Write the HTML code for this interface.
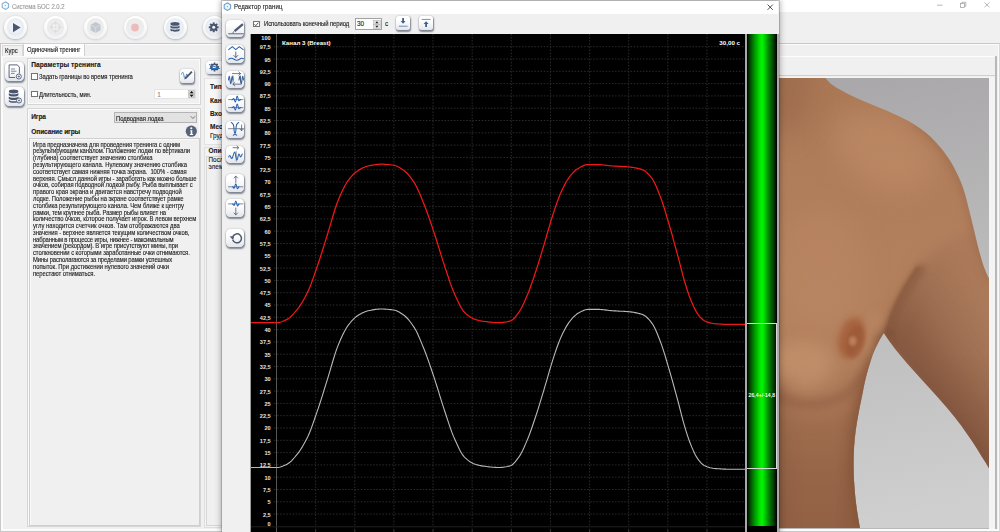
<!DOCTYPE html>
<html lang="ru"><head><meta charset="utf-8"><title>Система БОС 2.0.2</title>
<style>
html,body{margin:0;padding:0}
body{width:1000px;height:532px;overflow:hidden;background:#f0f0f0;position:relative;font-family:"Liberation Sans","DejaVu Sans",sans-serif;font-size:6px;color:#1a1a1a;line-height:1}
.abs{position:absolute}
.t{position:absolute;white-space:nowrap;line-height:8px;height:8px;-webkit-text-stroke:0.12px currentColor}
.b{font-weight:bold}
.axl text{font-family:"Liberation Sans",sans-serif;font-size:5.6px;font-weight:bold;fill:#e4e4e4}
.cht{font-family:"Liberation Sans",sans-serif;font-size:6.2px;font-weight:bold;fill:#fff}
.rb{position:absolute;width:23px;height:23px;border-radius:50%;background:linear-gradient(#fff 20%,#f0f1f3);box-shadow:0 1.2px 2.5px rgba(95,105,125,.38),0 0 1.2px rgba(95,105,125,.3)}
.rb::after{content:"";position:absolute;left:2.8px;top:2.6px;width:17.4px;height:17.4px;border-radius:50%;background:radial-gradient(circle at 50% 45%,#f6f9fc 0,#e7ecf2 65%,#dbe2ea 100%)}
.rb.dis{box-shadow:0 1.2px 2.5px rgba(120,125,140,.22),0 0 1.2px rgba(120,125,140,.2)}
.rb.dis::after{background:radial-gradient(circle at 50% 45%,#efeff0 0,#ebebec 70%,#e6e6e8 100%)}
.sb{position:absolute;border-radius:4.5px;background:linear-gradient(#fff 30%,#f3f4f6 65%,#e2e5ea);box-shadow:0.8px 1.5px 1.6px rgba(60,70,90,.6),0 0 1.4px rgba(60,70,90,.45)}
.grp{position:absolute;border:1px solid #d5d5d5;box-shadow:inset 0 0 0 1px #fbfbfb, 0 0 0 0 #fff;box-sizing:border-box}
.cb{position:absolute;width:6.2px;height:6.2px;box-sizing:border-box;border:1px solid #737373;background:#fff}
.desc{transform:scaleX(0.92);transform-origin:0 0;position:absolute;left:32.5px;top:141.7px;width:172px;font-size:6.4px;line-height:6.785px;color:#1c1c1c;white-space:nowrap;-webkit-text-stroke:0.12px currentColor}
.desc div{height:6.785px}

</style></head>
<body>
<!-- ================= main window ================= -->
<div class="abs" id="mtitle" style="left:0;top:0;width:1000px;height:12px;background:#fff"></div>
<svg class="abs" style="left:0.700px;top:1.400px" width="9" height="9.500" viewBox="0 0 9 9.500"><polygon points="4.400,0.800 7.600,2.700 7.600,6.500 4.400,8.400 1.200,6.500 1.200,2.700" fill="#f2f9fc" stroke="#82aed4" stroke-width="1.050"/><circle cx="4.400" cy="4.600" r="0.700" fill="#aab"/></svg>
<div class="t" style="left:12px;top:2.900px;font-size:6.500px;color:#9a9a9a;transform:scaleX(0.920);transform-origin:0 0;letter-spacing:-0.070px">Система БОС 2.0.2</div>
<svg class="abs" style="left:930px;top:0" width="70" height="12" viewBox="0 0 70 12">
 <g stroke="#9b9b9b" stroke-width="0.7" fill="none"><line x1="7" y1="5.2" x2="12.5" y2="5.2"/><rect x="30.5" y="3.4" width="4" height="4"/><path d="M31.8 3.4V2.3h4v4h-1.2"/><path d="M54.4 2.4l5 5M59.4 2.4l-5 5"/></g></svg>

<!-- toolbar round buttons -->
<div class="rb" style="left:4.100px;top:15.600px"></div>
<div class="rb dis" style="left:44.100px;top:15.600px"></div>
<div class="rb dis" style="left:84.100px;top:15.600px"></div>
<div class="rb dis" style="left:123.500px;top:15.600px"></div>
<div class="rb" style="left:163.500px;top:15.600px"></div>
<div class="rb" style="left:202.500px;top:15.600px"></div>
<svg class="abs" style="left:0;top:12px" width="230" height="32" viewBox="0 12 230 32">
 <path d="M13 23l7.6 4.6L13 32.2z" fill="#4a5670"/>
 <g stroke="#d2d4d9" stroke-width="0.700" fill="none"><circle cx="55.600" cy="27.200" r="4.300"/><path d="M55.600 21.200v3.600M55.600 29.600v3.600M49.600 27.200h3.600M58 27.200h3.600"/></g><circle cx="55.600" cy="27.200" r="0.700" fill="#d2d4d9"/>
 <path d="M95.6 22l5 2.7v5.6l-5 2.7-5-2.7v-5.6z" fill="#c3c7d0"/><path d="M95.6 27.6v5.2M95.6 27.6l-4.8-2.7M95.6 27.6l4.8-2.7" stroke="#e4e6ea" stroke-width="0.6"/>
 <circle cx="135" cy="27.5" r="3.9" fill="#ecbcbc"/>
 <g fill="#4a5670"><ellipse cx="175" cy="23.9" rx="4.6" ry="1.9"/><path d="M170.4 25.4c1 1.6 8.200 1.600 9.200 0v2c-1 1.600-8.200 1.600-9.200 0zM170.400 28.600c1 1.600 8.200 1.600 9.200 0v2c-1 1.600-8.200 1.600-9.200 0z"/></g>
 <g transform="translate(213.700 27.300)" fill="#4a5670"><circle r="3.500"/><g id="gt"><rect x="-1" y="-4.900" width="2" height="9.800"/></g><use href="#gt" transform="rotate(45)"/><use href="#gt" transform="rotate(90)"/><use href="#gt" transform="rotate(135)"/><circle r="1.500" fill="#f4f5f7"/></g>
</svg>

<!-- tab bar -->
<div class="abs" style="left:0;top:43px;width:1000px;height:489px;background:#fbfbfb;border:1px solid #c8c8c8;border-right-color:#d8d8d8;box-sizing:border-box"></div>
<div class="abs" style="left:2.600px;top:44.500px;width:995.400px;height:484.500px;background:#f0f0f0"></div>
<div class="abs" style="left:2px;top:45px;width:21px;height:10.500px;border:1px solid #d9d9d9;border-bottom:none;box-sizing:border-box;background:#f0f0f0"></div>
<div class="abs" style="left:23px;top:43px;width:61.500px;height:13px;border:1px solid #d0d0d0;border-bottom:none;box-sizing:border-box;background:#fff"></div>
<div class="abs" style="left:2px;top:55.500px;width:996px;height:1px;background:#fafafa"></div>
<div class="t" style="left:4.600px;top:47.250px;font-size:6.400px;transform:scaleX(0.920);transform-origin:0 0;letter-spacing:0.099px">Курс</div>
<div class="t" style="left:26.600px;top:46.250px;font-size:6.400px;transform:scaleX(0.920);transform-origin:0 0;letter-spacing:-0.050px">Одиночный тренинг</div>

<!-- left sidebar buttons -->
<div class="sb" style="left:5px;top:62px;width:18.500px;height:18.500px"></div>
<div class="sb" style="left:5px;top:87px;width:18.500px;height:18.500px"></div>
<svg class="abs" style="left:0;top:56px" width="30" height="56" viewBox="0 56 30 56">
 <g fill="none" stroke="#4a5670" stroke-width="0.900"><path d="M19.400 73.500v-6.300l-2-2.300h-8.300v12.600h6"/><path d="M11 69h4M11 71.200h5.500M11 73.400h3.500" stroke-width="0.700"/></g>
 <circle cx="18.800" cy="76.500" r="2.500" fill="#fff" stroke="#4a5670" stroke-width="0.900"/><path d="M17.600 76.500h2.400M18.800 75.300v2.400" stroke="#4a5670" stroke-width="0.700"/>
 <g fill="#4a5670"><ellipse cx="13.600" cy="91.500" rx="4.800" ry="1.900"/><path d="M8.800 93c1 1.700 8.600 1.700 9.600 0v2.200c-1 1.700-8.600 1.700-9.600 0zM8.800 96.500c1 1.700 8.600 1.700 9.600 0v2.200c-1 1.700-8.600 1.700-9.600 0zM8.800 100c1 1.700 8.600 1.700 9.600 0v1.500c-1 1.700-8.600 1.700-9.600 0z"/></g>
 <circle cx="19" cy="100.500" r="2.500" fill="#fff" stroke="#4a5670" stroke-width="0.900"/><path d="M17.800 100.500h2.400M19 99.300v2.400" stroke="#4a5670" stroke-width="0.700"/>
</svg>

<!-- group 1 -->
<div class="grp" style="left:27px;top:58px;width:174px;height:47px"></div>
<div class="t b" style="left:31.300px;top:61.000px;font-size:6.600px;letter-spacing:0.047px">Параметры тренинга</div>
<div class="cb" style="left:31px;top:73.100px;width:6.900px;height:6.600px"></div>
<div class="t" style="left:39.300px;top:72.550px;font-size:6.400px;transform:scaleX(0.920);transform-origin:0 0;letter-spacing:-0.075px">Задать границы во время тренинга</div>
<div class="cb" style="left:31px;top:90.700px;width:6.900px;height:6.700px"></div>
<div class="t" style="left:39.400px;top:90.500px;font-size:6.400px;transform:scaleX(0.920);transform-origin:0 0;letter-spacing:-0.074px">Длительность, мин.</div>
<div class="sb" style="left:179.500px;top:68.800px;width:14px;height:14px;border-radius:3.500px"></div>
<svg class="abs" style="left:178px;top:67px" width="18" height="18" viewBox="178 67 18 18"><path d="M181.500 74.500c.8-3 1.600-3 2.200 0s1.200 6 2 3 1-5 1.800-2" fill="none" stroke="#2f6fb5" stroke-width="0.800"/><path d="M184.500 79.500l.8-2.200 6-6.300 1.300 1.300-6 6.300z" fill="#4a5670"/></svg>
<div class="abs" style="left:154.400px;top:88.700px;width:42px;height:10.700px;background:#fff;border:1px solid #e4e4e4;box-sizing:border-box"></div>
<div class="t" style="left:157.200px;top:90.650px;font-size:6.400px;color:#8a8a8a">1</div>
<svg class="abs" style="left:188px;top:90px" width="8" height="9" viewBox="0 0 8 9"><rect x="0.400" y="0.300" width="6.400" height="3.600" fill="#d2d2d2" stroke="#b0b0b0" stroke-width="0.400"/><rect x="0.400" y="4.200" width="6.400" height="3.600" fill="#d2d2d2" stroke="#b0b0b0" stroke-width="0.400"/><path d="M1.700 3.300l1.900-2.300 1.900 2.300zM1.700 4.800l1.900 2.300 1.900-2.300z" fill="#111"/></svg>

<!-- group 2 -->
<div class="grp" style="left:27px;top:108px;width:174px;height:418.500px"></div>
<div class="t b" style="left:31.300px;top:112.900px;font-size:6.600px;letter-spacing:-0.165px">Игра</div>
<div class="abs" style="left:114.400px;top:112px;width:83px;height:10.500px;background:#e2e2e2;border:1px solid #b4b4b4;box-sizing:border-box"></div>
<div class="t" style="left:116.300px;top:114.650px;font-size:6.400px;transform:scaleX(0.920);transform-origin:0 0;letter-spacing:-0.029px">Подводная лодка</div>
<svg class="abs" style="left:189px;top:114px" width="8" height="7" viewBox="0 0 8 7"><path d="M1.700 2.300l2.200 2.200 2.200-2.200" fill="none" stroke="#444" stroke-width="0.700"/></svg>
<div class="t b" style="left:31.300px;top:128.400px;font-size:6.600px;letter-spacing:-0.135px">Описание игры</div>
<svg class="abs" style="left:185px;top:124.500px" width="13" height="13" viewBox="0 0 13 13"><circle cx="6.300" cy="6.200" r="5.600" fill="#56637b"/><circle cx="6.300" cy="3.300" r="1.050" fill="#fff"/><path d="M5.200 5.300h2.100v3.800h.8v.9h-3.300v-.9h.9v-2.900h-.5z" fill="#fff"/></svg>
<div class="abs" style="left:28.700px;top:138px;width:171px;height:387.600px;border:1px solid #cfcfcf;box-sizing:border-box;background:#f0f0f0;box-shadow:inset 1px 1px 0 #fafafa"></div>
<div class="desc">
<div style="letter-spacing:-0.084px">Игра предназначена для проведения тренинга с одним</div>
<div style="letter-spacing:-0.089px">результирующим каналом. Положение лодки по вертикали</div>
<div style="letter-spacing:-0.005px">(глубина) соответствует значению столбика</div>
<div style="letter-spacing:0.014px">результирующего канала. Нулевому значению столбика</div>
<div style="letter-spacing:-0.062px">соответствует самая нижняя точка экрана.&nbsp; 100% - самая</div>
<div style="letter-spacing:-0.091px">верхняя. Смысл данной игры - заработать как можно больше</div>
<div style="letter-spacing:-0.048px">очков, собирая подводной лодкой рыбу. Рыба выплывает с</div>
<div style="letter-spacing:-0.007px">правого края экрана и двигается навстречу подводной</div>
<div style="letter-spacing:-0.061px">лодке. Положение рыбы на экране соответствует рамке</div>
<div style="letter-spacing:-0.034px">столбика результирующего канала. Чем ближе к центру</div>
<div style="letter-spacing:-0.100px">рамки, тем крупнее рыба. Размер рыбы влияет на</div>
<div style="letter-spacing:-0.043px">количество очков, которое получает игрок. В левом верхнем</div>
<div style="letter-spacing:0.015px">углу находится счетчик очков. Там отображаются два</div>
<div style="letter-spacing:-0.056px">значения - верхнее является текущим количеством очков,</div>
<div style="letter-spacing:-0.168px">набранным в процессе игры, нижнее - максимальным</div>
<div style="letter-spacing:-0.102px">значением (рекордом). В игре присутствуют мины, при</div>
<div style="letter-spacing:-0.071px">столкновении с которыми заработанные очки отнимаются.</div>
<div style="letter-spacing:-0.127px">Мины располагаются за пределами рамки успешных</div>
<div style="letter-spacing:-0.031px">попыток. При достижении нулевого значений очки</div>
<div style="letter-spacing:-0.078px">перестают отниматься.</div>
</div>

<!-- middle panel (mostly hidden by dialog) -->
<div class="sb" style="left:206px;top:60.500px;width:18px;height:13px;border-radius:3.500px"></div>
<svg class="abs" style="left:205px;top:59px" width="18" height="16" viewBox="205 59 18 16"><g transform="translate(214.500 67)" fill="#4a5670"><circle r="3.200"/><g id="gt2"><rect x="-0.900" y="-4.500" width="1.800" height="9"/></g><use href="#gt2" transform="rotate(45)"/><use href="#gt2" transform="rotate(90)"/><use href="#gt2" transform="rotate(135)"/><circle r="1.900" fill="#f4f5f7"/></g><path d="M209 64.500l10.500 4M209.500 68.500h10" stroke="#2f6fb5" stroke-width="1" fill="none"/></svg>
<div class="abs" style="left:203.500px;top:78px;width:20px;height:66.500px;background:#f7f7f7;border:1px solid #e2e2e2;box-sizing:border-box"></div>
<div class="abs" style="left:203.500px;top:146.500px;width:20px;height:381px;background:#f3f3f3;border:1px solid #dedede;box-sizing:border-box"></div>
<div class="abs" style="left:205.500px;top:156px;width:18px;height:370px;background:#f0f0f0;border:1px solid #d6d6d6;box-sizing:border-box"></div>
<div class="t b" style="left:210px;top:83px;font-size:6.500px">Тип</div>
<div class="t b" style="left:210px;top:96.600px;font-size:6.500px">Кан</div>
<div class="t b" style="left:210px;top:109.600px;font-size:6.500px">Вхо</div>
<div class="t b" style="left:210px;top:122.600px;font-size:6.500px">Мес</div>
<div class="t" style="left:210px;top:132.150px;font-size:6.400px">Груд</div>
<div class="t b" style="left:208.500px;top:146.800px;font-size:6.500px">Опи</div>
<div class="t" style="left:208.500px;top:156.150px;font-size:6.400px">Посл</div>
<div class="t" style="left:208.500px;top:163.150px;font-size:6.400px">элем</div>

<!-- right image panel -->
<div class="abs" style="left:770px;top:56px;width:227px;height:19.500px;border:1px solid #fdfdfd;border-bottom-color:#cfcfcf;border-right-color:#dadada;box-sizing:border-box;background:#f0f0f0"></div>
<div class="abs" style="left:770px;top:77px;width:225px;height:452px;background:#f4f4f4"></div>
<div class="abs" style="left:995px;top:56px;width:1.800px;height:473px;background:linear-gradient(90deg,#c4c4c4,#a9a9a9 50%,#c9c9c9)"></div>
<div class="abs" style="left:770px;top:528px;width:218.500px;height:1px;background:#b9b9b9"></div>
<svg class="abs" style="left:778px;top:78px;overflow:hidden" width="210.500" height="450" viewBox="778 78 210.500 450">
<defs>
 <linearGradient id="bgG" x1="0" y1="0" x2="0.100" y2="1"><stop offset="0" stop-color="#a7a5a7"/><stop offset="0.380" stop-color="#b7b6b7"/><stop offset="0.760" stop-color="#c6c5c6"/><stop offset="1" stop-color="#cfcfcf"/></linearGradient>
 <linearGradient id="skG" x1="0" y1="0" x2="0" y2="1"><stop offset="0" stop-color="#aa7855"/><stop offset="0.250" stop-color="#b17e5c"/><stop offset="0.600" stop-color="#b5825f"/><stop offset="0.720" stop-color="#a97757"/><stop offset="0.850" stop-color="#9b6b4d"/><stop offset="1" stop-color="#946447"/></linearGradient>
 <linearGradient id="armG" gradientUnits="userSpaceOnUse" x1="896" y1="356" x2="986" y2="296"><stop offset="0" stop-color="#754a36" stop-opacity="0.850"/><stop offset="0.300" stop-color="#7f533d" stop-opacity="0.700"/><stop offset="0.600" stop-color="#8a5e47" stop-opacity="0.500"/><stop offset="1" stop-color="#8f644d" stop-opacity="0.220"/></linearGradient>
 <filter id="bl3" x="-40%" y="-40%" width="180%" height="180%"><feGaussianBlur stdDeviation="3"/></filter>
 <filter id="bl2" x="-40%" y="-40%" width="180%" height="180%"><feGaussianBlur stdDeviation="1.600"/></filter>
 <filter id="bl4" x="-60%" y="-60%" width="220%" height="220%"><feGaussianBlur stdDeviation="4"/></filter>
 <filter id="bl8" x="-100%" y="-100%" width="300%" height="300%"><feGaussianBlur stdDeviation="8"/></filter>
 <filter id="bl14" x="-100%" y="-100%" width="300%" height="300%"><feGaussianBlur stdDeviation="14"/></filter>
 <clipPath id="bodyClip"><path id="bodyP" d="M770 70H820.400C827 82 833 86 839.900 89.500C847 93.500 854 97 861.500 100.300C870 104 879 107.500 887.500 111.100C896 114.800 905 119 913.500 124.100C921 128.700 928.500 134.500 935.100 141.400C941 147.500 946 154 950.300 160.900C954.500 168 958 175 961.100 182.500C964 190 966 197 967.600 204.100C969.800 213 972 221.500 974 230.100C976 239 978 247.500 980.500 256.100C982.500 263.500 985 271 988.500 277.700H1000V480L988.500 467.600C986.500 464 984.500 460.500 982 457C975.500 446 968.500 435.500 960.800 425C952.500 414 943.500 403.500 934.200 393.300C925.500 383.500 916.500 374 907.700 364C899.500 354.500 891.500 345 883.800 333C878 342 873.500 351.500 870.500 361.500C867 372 864.500 382.500 862.600 393.300C860 405.500 857.500 418 855.700 430.500C854.300 441 853.600 451.500 853.600 462.300C853.500 471 853.800 480 854.600 488.900C855.500 502 857.500 515 860 528V540H770Z"/></clipPath>
</defs>
<rect x="770" y="70" width="230" height="470" fill="url(#bgG)"/>
<use href="#bodyP" fill="url(#skG)"/>
<g clip-path="url(#bodyClip)">
 <!-- shoulder highlight -->
 <ellipse cx="885" cy="150" rx="55" ry="36" fill="#c38f6b" opacity="0.550" filter="url(#bl14)" transform="rotate(28 885 150)"/>
 <ellipse cx="820" cy="270" rx="45" ry="60" fill="#bd8a66" opacity="0.450" filter="url(#bl14)"/>
 <!-- pec highlight -->
 <ellipse cx="803" cy="365" rx="30" ry="24" fill="#c99872" opacity="0.550" filter="url(#bl8)"/>
 <ellipse cx="872" cy="330" rx="9" ry="22" fill="#c08d69" opacity="0.400" filter="url(#bl4)" transform="rotate(25 872 330)"/>
 <!-- neck shadow top-left -->
 <ellipse cx="783" cy="92" rx="28" ry="42" fill="#946548" opacity="0.550" filter="url(#bl14)"/>
 <!-- shoulder outer edge shadow -->
 <path d="M913.500 122C935 135 952 158 962 184C970 210 976 240 990 280" fill="none" stroke="#8c5c40" stroke-width="5" opacity="0.500" filter="url(#bl4)"/>
 <!-- arm shade -->
 <path d="M926 258C912 280 900 300 893 318C889 326 887 330 886 334C900 352 930 388 960 424C972 440 982 456 1000 480V225C975 228 950 238 926 258Z" fill="url(#armG)" filter="url(#bl8)"/>
 <path d="M884 333C900 352 930 388 960 424C972 440 982 456 992 472" fill="none" stroke="#6e4535" stroke-width="13" opacity="0.500" filter="url(#bl4)"/>
 <path d="M889 336C892 320 903 294 923 266" fill="none" stroke="#6f452f" stroke-width="9" opacity="0.420" filter="url(#bl3)"/><path d="M886 334C889 318 900 292 918 267" fill="none" stroke="#73472f" stroke-width="2.500" opacity="0.450" filter="url(#bl2)"/>
 <!-- torso side shadow -->
 <path d="M884 335C872 360 864 392 857 430C854 462 854 490 861 528" fill="none" stroke="#75482f" stroke-width="12" opacity="0.600" filter="url(#bl4)"/>
 <path d="M868 372C860 405 852 440 852 535" fill="none" stroke="#8a5a3d" stroke-width="20" opacity="0.400" filter="url(#bl8)"/>
 <!-- under-pec shadow -->
 <path d="M772 394C795 406 820 409 845 395C858 386 866 375 872 360" fill="none" stroke="#8a583c" stroke-width="8" opacity="0.550" filter="url(#bl4)"/>
 <path d="M770 540V410C800 425 840 420 870 400V540Z" fill="#8a5a3e" opacity="0.250" filter="url(#bl8)"/>
 <rect x="765" y="380" width="22" height="170" fill="#7e5038" opacity="0.350" filter="url(#bl8)"/>
 <!-- nipple -->
 <ellipse cx="851.500" cy="338" rx="12.500" ry="21" fill="#a45e3a" opacity="0.900" filter="url(#bl3)" transform="rotate(15 851.500 338)"/>
 <ellipse cx="855.500" cy="342" rx="8.500" ry="16.500" fill="#985434" opacity="0.500" filter="url(#bl2)" transform="rotate(15 855.500 342)"/>
 <ellipse cx="852.800" cy="341" rx="3.800" ry="4.800" fill="#c58b6b" opacity="0.750" filter="url(#bl2)"/>
</g>
</svg>


<!-- ================= dialog ================= -->
<div class="abs" style="left:221.500px;top:0.500px;width:557px;height:532px;background:#f0f0f0;box-shadow:0 0 6px 1px rgba(0,0,0,.32),0 0 0 0.700px rgba(0,0,0,.22)"></div>
<div class="abs" style="left:222px;top:1px;width:556px;height:13px;background:#fff"></div>
<svg class="abs" style="left:222.600px;top:2px" width="9" height="9.500" viewBox="0 0 9 9.500"><polygon points="4.400,0.800 7.600,2.700 7.600,6.500 4.400,8.400 1.200,6.500 1.200,2.700" fill="#eaf5fa" stroke="#6b9bc6" stroke-width="1.050"/><circle cx="4.400" cy="4.600" r="0.700" fill="#99a"/></svg>
<div class="t" style="left:234px;top:2.700px;font-size:6.600px;color:#222;transform:scaleX(0.920);transform-origin:0 0;letter-spacing:0.107px">Редактор границ</div>
<svg class="abs" style="left:763.200px;top:1.600px" width="14" height="11" viewBox="0 0 14 11"><path d="M4.600 2.600l5.200 5.200M9.800 2.600l-5.200 5.200" stroke="#222" stroke-width="0.800" fill="none"/></svg>
<!-- dialog toolbar -->
<div class="cb" style="left:253.400px;top:21px;width:6.300px;height:6.300px"></div>
<svg class="abs" style="left:253.400px;top:21px" width="7" height="7" viewBox="0 0 7 7"><path d="M1.500 3.300l1.300 1.400 2.500-3" fill="none" stroke="#222" stroke-width="0.800"/></svg>
<div class="t" style="left:263.600px;top:20.150px;font-size:6.400px;transform:scaleX(0.920);transform-origin:0 0;letter-spacing:-0.059px">Использовать конечный период</div>
<div class="abs" style="left:355px;top:18.400px;width:26.500px;height:11.200px;background:#fff;border:1px solid #a2a2a2;box-sizing:border-box"></div>
<div class="t" style="left:357px;top:20.250px;font-size:6.400px">30</div>
<svg class="abs" style="left:372.500px;top:19.500px" width="8" height="9" viewBox="0 0 8 9"><rect x="0.500" y="0.300" width="6.800" height="3.900" fill="#e4e4e4" stroke="#aaa" stroke-width="0.500"/><rect x="0.500" y="4.700" width="6.800" height="3.900" fill="#e4e4e4" stroke="#aaa" stroke-width="0.500"/><path d="M2.300 3.300l1.600-2 1.600 2zM2.300 5.700l1.600 2 1.600-2z" fill="#222"/></svg>
<div class="t" style="left:385px;top:20.250px;font-size:6.400px">с</div>
<div class="sb" style="left:396px;top:16px;width:14px;height:14px;border-radius:3px"></div>
<div class="sb" style="left:419px;top:16px;width:14px;height:14px;border-radius:3px"></div>
<svg class="abs" style="left:394px;top:14px" width="42" height="18" viewBox="394 14 42 18">
 <path d="M402.200 18h1.800v3h1.600l-2.500 2.700-2.500-2.700h1.600z" fill="#3f5f95"/><path d="M398.800 26.200h8.800" stroke="#3f5f95" stroke-width="0.700"/>
 <path d="M425.200 27h1.800v-3h1.600l-2.500-2.700-2.500 2.700h1.600z" fill="#3f5f95"/><path d="M421.800 19.400h8.800" stroke="#3f5f95" stroke-width="0.700"/>
</svg>
<!-- dialog left tool buttons -->
<div class="sb" style="left:226px;top:19.9px;width:18.2px;height:17.6px"></div>
<div class="sb" style="left:226px;top:45.2px;width:18.2px;height:17.6px"></div>
<div class="sb" style="left:226px;top:70.5px;width:18.2px;height:17.6px"></div>
<div class="sb" style="left:226px;top:94.9px;width:18.2px;height:17.6px"></div>
<div class="sb" style="left:226px;top:120.8px;width:18.2px;height:17.6px"></div>
<div class="sb" style="left:226px;top:145.6px;width:18.2px;height:17.6px"></div>
<div class="sb" style="left:226px;top:174.4px;width:18.2px;height:17.6px"></div>
<div class="sb" style="left:226px;top:199.4px;width:18.2px;height:17.6px"></div>
<div class="sb" style="left:226px;top:229.4px;width:18.2px;height:17.6px"></div>
<svg class="abs" style="left:222px;top:14px" width="29" height="240" viewBox="222 14 29 240" fill="none" stroke-linecap="round" stroke-linejoin="round"><path d="M242.9 24.1L234.6 31.1" stroke="#4e5a74" stroke-width="2.3" stroke-linecap="butt"/><path d="M234 31.600l-1.300 1.200" stroke="#4e5a74" stroke-width="1"/><path d="M228.700 33.800h14.800" stroke="#4e5a74" stroke-width="0.900"/><path d="M228.700 49.600l3.600-2.900 3.500 2.900 3.500-2.900 3.900 2.900" stroke="#2a62b0" stroke-width="1.050"/><path d="M235.800 52v5.300M233.800 55.500l2 2 2-2" stroke="#4e5a74" stroke-width="0.900"/><path d="M228.700 59.200c1.800-1.300 3.600-1.300 5.400 0s3.600 1.300 5.400 0 2.700-1.200 4-.4" stroke="#2a62b0" stroke-width="1.050"/><path d="M228.500 80c.5-5 1-5 1.500 0s1 5 1.500 0 1-5 1.500 0" stroke="#2a62b0" stroke-width="1.050"/><path d="M239 80c.5-5 1-5 1.500 0s1 5 1.500 0 1-5 1.500 0" stroke="#2a62b0" stroke-width="1.050"/><path d="M232.500 73.600h8M238.700 71.900l1.900 1.700-1.900 1.700M241 84.200h-8M234.800 82.500l-1.900 1.700 1.900 1.700M233 76v6M240.500 76v6" stroke="#4e5a74" stroke-width="0.800"/><path d="M228.500 99.6h14.500" stroke="#4e5a74" stroke-width="0.700"/><path d="M232 99.6c1 0 1.200-1.200 1.800-1.200s.800 3.600 1.600 3.600 1-6 1.800-6 .900 4.800 1.700 4.800 .800-1.200 1.800-1.200" stroke="#2a62b0" stroke-width="1.050"/><path d="M228.500 107.6h14.500" stroke="#4e5a74" stroke-width="0.700"/><path d="M232 107.6c1 0 1.200-1.200 1.800-1.200s.800 3.600 1.600 3.600 1-6 1.800-6 .900 4.800 1.700 4.800 .800-1.200 1.800-1.200" stroke="#2a62b0" stroke-width="1.050"/><path d="M228.500 128.700h15" stroke="#4e5a74" stroke-width="0.700"/><path d="M231.300 122.500c2.200 1 2.700 3.500 2.700 6.200s.500 5.500 2.700 6.500M238.700 122.500c-2.200 1-2.700 3.500-2.700 6.200s-.500 5.500-2.700 6.500" stroke="#2a62b0" stroke-width="1.050"/><path d="M241.600 125v5.600M239.900 129l1.700 1.800 1.700-1.800" stroke="#4e5a74" stroke-width="0.800"/><path d="M233 147.700h5.600M237 146l1.800 1.700-1.800 1.700" stroke="#4e5a74" stroke-width="0.800"/><path d="M236.200 151.500v9.500" stroke="#4e5a74" stroke-width="0.600"/><path d="M228.700 157c.700-2 1.300-2 2 0s1.300 2 2 0 1.200-5 2-5 1.300 8 2.200 8 1.200-6 2-6 1 3 1.800 3 1-2 1.500-3" stroke="#2a62b0" stroke-width="1.050"/><path d="M235.800 182.400v-6.200M234 178l1.800-1.900 1.800 1.900" stroke="#4e5a74" stroke-width="0.800"/><path d="M228.500 186.800h14.500" stroke="#4e5a74" stroke-width="0.700"/><path d="M232.500 186.800c.800 0 1 1.500 1.600 1.500s1-4.500 1.700-4.500 1 5 1.700 5 .800-2 1.600-2" stroke="#2a62b0" stroke-width="1.050"/><path d="M228.500 203.900h14.500" stroke="#4e5a74" stroke-width="0.700"/><path d="M232.500 203.900c.800 0 1 1.500 1.600 1.500s1-4.500 1.700-4.500 1 5 1.700 5 .800-2 1.600-2" stroke="#2a62b0" stroke-width="1.050"/><path d="M235.800 208v6.800M234 213l1.800 1.900 1.800-1.900" stroke="#4e5a74" stroke-width="0.800"/><path d="M232.700 239.800a4.500 4.500 0 1 0 .300-3.600" stroke="#4e5a74" stroke-width="1.500" stroke-linecap="butt"/><path d="M229.600 236.600l4.600-.600-1 4z" fill="#4e5a74" stroke="none"/></svg>

<!-- chart -->
<div class="abs" style="left:250px;top:33.500px;width:1px;height:499px;background:#9c9c9c"></div>
<div class="abs" style="left:251px;top:34px;width:494px;height:498px;background:#000"></div>
<div class="abs" style="left:745px;top:34px;width:2px;height:498px;background:linear-gradient(90deg,#8c8c8c,#c4c4c4 50%,#8c8c8c)"></div>
<div class="abs" style="left:747px;top:34px;width:29.700px;height:498px;background:#000"></div>
<div class="abs" style="left:747px;top:34px;width:29.700px;height:492px;background:linear-gradient(90deg,#000 0,#003800 8%,#008a00 23%,#00e000 42%,#00f800 50%,#00d000 59%,#008800 72%,#004000 88%,#000 99%)"></div>
<div class="abs" style="left:776.700px;top:34px;width:1.900px;height:498px;background:#aeaaaa"></div>
<div class="abs" style="left:747px;top:322.800px;width:29.700px;height:146.500px;border:1px solid #d8d8d8;border-left:none;box-sizing:border-box"></div>
<div class="t" style="left:747px;top:391px;width:29.700px;text-align:center;font-size:5px;color:#fff;letter-spacing:0.100px">26,4+/-14,8</div>
<svg class="abs" style="left:0;top:0" width="1000" height="532" viewBox="0 0 1000 532"><g stroke="#2c2c2c" stroke-width="1" stroke-dasharray="1.5 1.6"><line x1="274.0" y1="514.10" x2="745" y2="514.10"/><line x1="274.0" y1="501.80" x2="745" y2="501.80"/><line x1="274.0" y1="489.50" x2="745" y2="489.50"/><line x1="274.0" y1="477.20" x2="745" y2="477.20"/><line x1="274.0" y1="464.90" x2="745" y2="464.90"/><line x1="274.0" y1="452.60" x2="745" y2="452.60"/><line x1="274.0" y1="440.30" x2="745" y2="440.30"/><line x1="274.0" y1="428.00" x2="745" y2="428.00"/><line x1="274.0" y1="415.70" x2="745" y2="415.70"/><line x1="274.0" y1="403.40" x2="745" y2="403.40"/><line x1="274.0" y1="391.10" x2="745" y2="391.10"/><line x1="274.0" y1="378.80" x2="745" y2="378.80"/><line x1="274.0" y1="366.50" x2="745" y2="366.50"/><line x1="274.0" y1="354.20" x2="745" y2="354.20"/><line x1="274.0" y1="341.90" x2="745" y2="341.90"/><line x1="274.0" y1="329.60" x2="745" y2="329.60"/><line x1="274.0" y1="317.30" x2="745" y2="317.30"/><line x1="274.0" y1="305.00" x2="745" y2="305.00"/><line x1="274.0" y1="292.70" x2="745" y2="292.70"/><line x1="274.0" y1="280.40" x2="745" y2="280.40"/><line x1="274.0" y1="268.10" x2="745" y2="268.10"/><line x1="274.0" y1="255.80" x2="745" y2="255.80"/><line x1="274.0" y1="243.50" x2="745" y2="243.50"/><line x1="274.0" y1="231.20" x2="745" y2="231.20"/><line x1="274.0" y1="218.90" x2="745" y2="218.90"/><line x1="274.0" y1="206.60" x2="745" y2="206.60"/><line x1="274.0" y1="194.30" x2="745" y2="194.30"/><line x1="274.0" y1="182.00" x2="745" y2="182.00"/><line x1="274.0" y1="169.70" x2="745" y2="169.70"/><line x1="274.0" y1="157.40" x2="745" y2="157.40"/><line x1="274.0" y1="145.10" x2="745" y2="145.10"/><line x1="274.0" y1="132.80" x2="745" y2="132.80"/><line x1="274.0" y1="120.50" x2="745" y2="120.50"/><line x1="274.0" y1="108.20" x2="745" y2="108.20"/><line x1="274.0" y1="95.90" x2="745" y2="95.90"/><line x1="274.0" y1="83.60" x2="745" y2="83.60"/><line x1="274.0" y1="71.30" x2="745" y2="71.30"/><line x1="274.0" y1="59.00" x2="745" y2="59.00"/><line x1="274.0" y1="46.70" x2="745" y2="46.70"/><line x1="315.63" y1="34" x2="315.63" y2="526.4"/><line x1="354.77" y1="34" x2="354.77" y2="526.4"/><line x1="393.90" y1="34" x2="393.90" y2="526.4"/><line x1="433.03" y1="34" x2="433.03" y2="526.4"/><line x1="472.17" y1="34" x2="472.17" y2="526.4"/><line x1="511.30" y1="34" x2="511.30" y2="526.4"/><line x1="550.43" y1="34" x2="550.43" y2="526.4"/><line x1="589.57" y1="34" x2="589.57" y2="526.4"/><line x1="628.70" y1="34" x2="628.70" y2="526.4"/><line x1="667.83" y1="34" x2="667.83" y2="526.4"/><line x1="706.97" y1="34" x2="706.97" y2="526.4"/></g><line x1="276.5" y1="34" x2="276.5" y2="532" stroke="#565656" stroke-width="1"/><line x1="251" y1="526.8" x2="745" y2="526.8" stroke="#202020" stroke-width="1"/><line x1="315.63" y1="528.9" x2="315.63" y2="532" stroke="#3a3a3a" stroke-width="1"/><line x1="354.77" y1="528.9" x2="354.77" y2="532" stroke="#3a3a3a" stroke-width="1"/><line x1="393.90" y1="528.9" x2="393.90" y2="532" stroke="#3a3a3a" stroke-width="1"/><line x1="433.03" y1="528.9" x2="433.03" y2="532" stroke="#3a3a3a" stroke-width="1"/><line x1="472.17" y1="528.9" x2="472.17" y2="532" stroke="#3a3a3a" stroke-width="1"/><line x1="511.30" y1="528.9" x2="511.30" y2="532" stroke="#3a3a3a" stroke-width="1"/><line x1="550.43" y1="528.9" x2="550.43" y2="532" stroke="#3a3a3a" stroke-width="1"/><line x1="589.57" y1="528.9" x2="589.57" y2="532" stroke="#3a3a3a" stroke-width="1"/><line x1="628.70" y1="528.9" x2="628.70" y2="532" stroke="#3a3a3a" stroke-width="1"/><line x1="667.83" y1="528.9" x2="667.83" y2="532" stroke="#3a3a3a" stroke-width="1"/><line x1="706.97" y1="528.9" x2="706.97" y2="532" stroke="#3a3a3a" stroke-width="1"/><g class="axl" text-anchor="end"><text x="270.7" y="525.7">0</text><text x="270.7" y="516.6">2,5</text><text x="270.7" y="504.2">5</text><text x="270.7" y="491.9">7,5</text><text x="270.7" y="479.6">10</text><text x="270.7" y="467.3">12,5</text><text x="270.7" y="455.0">15</text><text x="270.7" y="442.7">17,5</text><text x="270.7" y="430.4">20</text><text x="270.7" y="418.1">22,5</text><text x="270.7" y="405.8">25</text><text x="270.7" y="393.5">27,5</text><text x="270.7" y="381.2">30</text><text x="270.7" y="368.9">32,5</text><text x="270.7" y="356.6">35</text><text x="270.7" y="344.3">37,5</text><text x="270.7" y="332.0">40</text><text x="270.7" y="319.7">42,5</text><text x="270.7" y="307.4">45</text><text x="270.7" y="295.1">47,5</text><text x="270.7" y="282.8">50</text><text x="270.7" y="270.5">52,5</text><text x="270.7" y="258.2">55</text><text x="270.7" y="245.9">57,5</text><text x="270.7" y="233.6">60</text><text x="270.7" y="221.3">62,5</text><text x="270.7" y="209.0">65</text><text x="270.7" y="196.7">67,5</text><text x="270.7" y="184.4">70</text><text x="270.7" y="172.1">72,5</text><text x="270.7" y="159.8">75</text><text x="270.7" y="147.5">77,5</text><text x="270.7" y="135.2">80</text><text x="270.7" y="123.0">82,5</text><text x="270.7" y="110.6">85</text><text x="270.7" y="98.3">87,5</text><text x="270.7" y="86.0">90</text><text x="270.7" y="73.8">92,5</text><text x="270.7" y="61.5">95</text><text x="270.7" y="49.1">97,5</text><text x="270.7" y="40.2">100</text></g><path d="M251.0 467.5 L252.5 467.5 L254.0 467.5 L255.5 467.5 L257.0 467.5 L258.5 467.5 L260.0 467.5 L261.5 467.5 L263.0 467.5 L264.5 467.5 L266.0 467.5 L267.5 467.5 L269.0 467.5 L270.5 467.5 L272.0 467.5 L273.5 467.5 L275.0 467.5 L276.5 467.5 L278.0 467.5 L279.5 467.2 L281.0 466.8 L282.5 466.3 L284.0 465.6 L285.5 464.9 L287.0 464.2 L288.5 463.3 L290.0 462.2 L291.5 460.8 L293.0 459.2 L294.5 457.5 L296.0 455.7 L297.5 453.9 L299.0 451.9 L300.5 449.7 L302.0 447.4 L303.5 444.8 L305.0 442.1 L306.5 439.2 L308.0 436.2 L309.5 432.7 L311.0 429.0 L312.5 424.9 L314.0 420.7 L315.5 416.3 L317.0 411.9 L318.5 407.6 L320.0 403.0 L321.5 398.3 L323.0 393.6 L324.5 388.7 L326.0 383.9 L327.5 379.1 L329.0 374.2 L330.5 369.2 L332.0 364.0 L333.5 359.0 L335.0 354.1 L336.5 349.6 L338.0 345.6 L339.5 342.0 L341.0 338.5 L342.5 335.3 L344.0 332.2 L345.5 329.5 L347.0 327.0 L348.5 324.9 L350.0 323.0 L351.5 321.2 L353.0 319.6 L354.5 318.1 L356.0 316.8 L357.5 315.7 L359.0 314.7 L360.5 313.9 L362.0 313.1 L363.5 312.4 L365.0 311.8 L366.5 311.2 L368.0 310.8 L369.5 310.5 L371.0 310.2 L372.5 309.9 L374.0 309.6 L375.5 309.4 L377.0 309.2 L378.5 309.1 L380.0 309.0 L381.5 309.0 L383.0 309.0 L384.5 309.1 L386.0 309.2 L387.5 309.3 L389.0 309.5 L390.5 309.6 L392.0 309.8 L393.5 310.0 L395.0 310.3 L396.5 310.8 L398.0 311.5 L399.5 312.3 L401.0 313.3 L402.5 314.3 L404.0 315.3 L405.5 316.5 L407.0 318.0 L408.5 319.6 L410.0 321.5 L411.5 323.5 L413.0 325.7 L414.5 327.9 L416.0 330.6 L417.5 333.6 L419.0 336.9 L420.5 340.4 L422.0 344.1 L423.5 347.8 L425.0 351.5 L426.5 355.5 L428.0 359.6 L429.5 363.9 L431.0 368.3 L432.5 372.7 L434.0 377.2 L435.5 381.8 L437.0 386.5 L438.5 391.4 L440.0 396.3 L441.5 401.2 L443.0 405.9 L444.5 410.5 L446.0 415.0 L447.5 419.6 L449.0 424.1 L450.5 428.5 L452.0 432.6 L453.5 436.4 L455.0 439.8 L456.5 443.1 L458.0 446.3 L459.5 449.4 L461.0 452.2 L462.5 454.6 L464.0 456.6 L465.5 458.1 L467.0 459.4 L468.5 460.6 L470.0 461.7 L471.5 462.6 L473.0 463.4 L474.5 464.0 L476.0 464.5 L477.5 464.9 L479.0 465.3 L480.5 465.6 L482.0 465.9 L483.5 466.1 L485.0 466.3 L486.5 466.5 L488.0 466.7 L489.5 466.9 L491.0 467.0 L492.5 467.2 L494.0 467.3 L495.5 467.4 L497.0 467.5 L498.5 467.5 L500.0 467.5 L501.5 467.4 L503.0 467.2 L504.5 467.0 L506.0 466.8 L507.5 466.5 L509.0 466.1 L510.5 465.7 L512.0 465.0 L513.5 463.7 L515.0 462.1 L516.5 460.2 L518.0 458.2 L519.5 456.1 L521.0 453.6 L522.5 450.7 L524.0 447.5 L525.5 444.1 L527.0 440.6 L528.5 437.0 L530.0 433.0 L531.5 428.8 L533.0 424.5 L534.5 420.0 L536.0 415.5 L537.5 410.9 L539.0 406.1 L540.5 401.2 L542.0 396.2 L543.5 391.3 L545.0 386.2 L546.5 381.1 L548.0 375.8 L549.5 370.6 L551.0 365.6 L552.5 360.8 L554.0 356.2 L555.5 351.7 L557.0 347.3 L558.5 343.2 L560.0 339.4 L561.5 336.0 L563.0 332.8 L564.5 329.9 L566.0 327.1 L567.5 324.6 L569.0 322.4 L570.5 320.5 L572.0 318.7 L573.5 317.0 L575.0 315.6 L576.5 314.3 L578.0 313.3 L579.5 312.5 L581.0 311.6 L582.5 310.9 L584.0 310.2 L585.5 309.7 L587.0 309.5 L588.5 309.4 L590.0 309.4 L591.5 309.4 L593.0 309.4 L594.5 309.4 L596.0 309.4 L597.5 309.4 L599.0 309.4 L600.5 309.5 L602.0 309.6 L603.5 309.8 L605.0 309.9 L606.5 310.1 L608.0 310.3 L609.5 310.5 L611.0 310.6 L612.5 310.8 L614.0 310.9 L615.5 310.9 L617.0 311.0 L618.5 311.1 L620.0 311.2 L621.5 311.2 L623.0 311.3 L624.5 311.4 L626.0 311.5 L627.5 311.6 L629.0 311.7 L630.5 311.9 L632.0 312.1 L633.5 312.3 L635.0 312.6 L636.5 312.9 L638.0 313.2 L639.5 313.6 L641.0 314.0 L642.5 314.6 L644.0 315.3 L645.5 316.2 L647.0 317.5 L648.5 319.0 L650.0 320.7 L651.5 322.6 L653.0 324.8 L654.5 327.5 L656.0 330.7 L657.5 334.2 L659.0 338.0 L660.5 341.9 L662.0 346.1 L663.5 350.6 L665.0 355.4 L666.5 360.5 L668.0 365.6 L669.5 370.7 L671.0 375.8 L672.5 381.2 L674.0 386.6 L675.5 392.1 L677.0 397.6 L678.5 403.2 L680.0 409.0 L681.5 414.9 L683.0 420.6 L684.5 425.9 L686.0 430.8 L687.5 435.6 L689.0 440.0 L690.5 444.0 L692.0 447.6 L693.5 451.0 L695.0 454.2 L696.5 456.9 L698.0 459.1 L699.5 461.1 L701.0 462.8 L702.5 464.3 L704.0 465.4 L705.5 466.1 L707.0 466.7 L708.5 467.2 L710.0 467.7 L711.5 468.0 L713.0 468.3 L714.5 468.5 L716.0 468.6 L717.5 468.7 L719.0 468.8 L720.5 468.9 L722.0 469.0 L723.5 469.1 L725.0 469.1 L726.5 469.2 L728.0 469.2 L729.5 469.2 L731.0 469.2 L732.5 469.2 L734.0 469.2 L735.5 469.2 L737.0 469.2 L738.5 469.2 L740.0 469.2 L741.5 469.2 L743.0 469.2 L744.5 469.2 L745.0 469.2" fill="none" stroke="#b9b9b9" stroke-width="1.1" stroke-linejoin="round"/><path d="M251.0 322.7 L252.5 322.7 L254.0 322.7 L255.5 322.7 L257.0 322.7 L258.5 322.7 L260.0 322.7 L261.5 322.7 L263.0 322.7 L264.5 322.7 L266.0 322.7 L267.5 322.7 L269.0 322.7 L270.5 322.7 L272.0 322.7 L273.5 322.7 L275.0 322.7 L276.5 322.7 L278.0 322.7 L279.5 322.4 L281.0 322.0 L282.5 321.5 L284.0 320.8 L285.5 320.1 L287.0 319.4 L288.5 318.5 L290.0 317.4 L291.5 316.0 L293.0 314.4 L294.5 312.7 L296.0 310.9 L297.5 309.1 L299.0 307.1 L300.5 304.9 L302.0 302.6 L303.5 300.0 L305.0 297.3 L306.5 294.4 L308.0 291.4 L309.5 287.9 L311.0 284.2 L312.5 280.1 L314.0 275.9 L315.5 271.5 L317.0 267.1 L318.5 262.8 L320.0 258.2 L321.5 253.5 L323.0 248.8 L324.5 243.9 L326.0 239.1 L327.5 234.3 L329.0 229.4 L330.5 224.4 L332.0 219.2 L333.5 214.2 L335.0 209.3 L336.5 204.8 L338.0 200.8 L339.5 197.2 L341.0 193.7 L342.5 190.5 L344.0 187.4 L345.5 184.7 L347.0 182.2 L348.5 180.1 L350.0 178.2 L351.5 176.4 L353.0 174.8 L354.5 173.3 L356.0 172.0 L357.5 170.9 L359.0 169.9 L360.5 169.1 L362.0 168.3 L363.5 167.6 L365.0 167.0 L366.5 166.4 L368.0 166.0 L369.5 165.7 L371.0 165.4 L372.5 165.1 L374.0 164.8 L375.5 164.6 L377.0 164.4 L378.5 164.3 L380.0 164.2 L381.5 164.2 L383.0 164.2 L384.5 164.3 L386.0 164.4 L387.5 164.5 L389.0 164.7 L390.5 164.8 L392.0 165.0 L393.5 165.2 L395.0 165.5 L396.5 166.0 L398.0 166.7 L399.5 167.5 L401.0 168.5 L402.5 169.5 L404.0 170.5 L405.5 171.7 L407.0 173.2 L408.5 174.8 L410.0 176.7 L411.5 178.7 L413.0 180.9 L414.5 183.1 L416.0 185.8 L417.5 188.8 L419.0 192.1 L420.5 195.6 L422.0 199.3 L423.5 203.0 L425.0 206.7 L426.5 210.7 L428.0 214.8 L429.5 219.1 L431.0 223.5 L432.5 227.9 L434.0 232.4 L435.5 237.0 L437.0 241.7 L438.5 246.6 L440.0 251.5 L441.5 256.4 L443.0 261.1 L444.5 265.7 L446.0 270.2 L447.5 274.8 L449.0 279.3 L450.5 283.7 L452.0 287.8 L453.5 291.6 L455.0 295.0 L456.5 298.3 L458.0 301.5 L459.5 304.6 L461.0 307.4 L462.5 309.8 L464.0 311.8 L465.5 313.3 L467.0 314.6 L468.5 315.8 L470.0 316.9 L471.5 317.8 L473.0 318.6 L474.5 319.2 L476.0 319.7 L477.5 320.1 L479.0 320.5 L480.5 320.8 L482.0 321.1 L483.5 321.3 L485.0 321.5 L486.5 321.7 L488.0 321.9 L489.5 322.1 L491.0 322.2 L492.5 322.4 L494.0 322.5 L495.5 322.6 L497.0 322.7 L498.5 322.7 L500.0 322.7 L501.5 322.6 L503.0 322.4 L504.5 322.2 L506.0 322.0 L507.5 321.7 L509.0 321.3 L510.5 320.9 L512.0 320.2 L513.5 318.9 L515.0 317.3 L516.5 315.4 L518.0 313.4 L519.5 311.3 L521.0 308.8 L522.5 305.9 L524.0 302.7 L525.5 299.3 L527.0 295.8 L528.5 292.2 L530.0 288.2 L531.5 284.0 L533.0 279.7 L534.5 275.2 L536.0 270.7 L537.5 266.1 L539.0 261.3 L540.5 256.4 L542.0 251.4 L543.5 246.5 L545.0 241.4 L546.5 236.3 L548.0 231.0 L549.5 225.8 L551.0 220.8 L552.5 216.0 L554.0 211.4 L555.5 206.9 L557.0 202.5 L558.5 198.4 L560.0 194.6 L561.5 191.2 L563.0 188.0 L564.5 185.1 L566.0 182.3 L567.5 179.8 L569.0 177.6 L570.5 175.7 L572.0 173.9 L573.5 172.2 L575.0 170.8 L576.5 169.5 L578.0 168.5 L579.5 167.7 L581.0 166.8 L582.5 166.1 L584.0 165.4 L585.5 164.9 L587.0 164.7 L588.5 164.6 L590.0 164.6 L591.5 164.6 L593.0 164.6 L594.5 164.6 L596.0 164.6 L597.5 164.6 L599.0 164.6 L600.5 164.7 L602.0 164.8 L603.5 165.0 L605.0 165.1 L606.5 165.3 L608.0 165.5 L609.5 165.7 L611.0 165.8 L612.5 166.0 L614.0 166.1 L615.5 166.1 L617.0 166.2 L618.5 166.3 L620.0 166.4 L621.5 166.4 L623.0 166.5 L624.5 166.6 L626.0 166.7 L627.5 166.8 L629.0 166.9 L630.5 167.1 L632.0 167.3 L633.5 167.5 L635.0 167.8 L636.5 168.1 L638.0 168.4 L639.5 168.8 L641.0 169.2 L642.5 169.8 L644.0 170.5 L645.5 171.4 L647.0 172.7 L648.5 174.2 L650.0 175.9 L651.5 177.8 L653.0 180.0 L654.5 182.7 L656.0 185.9 L657.5 189.4 L659.0 193.2 L660.5 197.1 L662.0 201.3 L663.5 205.8 L665.0 210.6 L666.5 215.7 L668.0 220.8 L669.5 225.9 L671.0 231.0 L672.5 236.4 L674.0 241.8 L675.5 247.3 L677.0 252.8 L678.5 258.4 L680.0 264.2 L681.5 270.1 L683.0 275.8 L684.5 281.1 L686.0 286.0 L687.5 290.8 L689.0 295.2 L690.5 299.2 L692.0 302.8 L693.5 306.2 L695.0 309.4 L696.5 312.1 L698.0 314.3 L699.5 316.3 L701.0 318.0 L702.5 319.5 L704.0 320.6 L705.5 321.3 L707.0 321.9 L708.5 322.4 L710.0 322.9 L711.5 323.2 L713.0 323.5 L714.5 323.7 L716.0 323.8 L717.5 323.9 L719.0 324.0 L720.5 324.1 L722.0 324.2 L723.5 324.3 L725.0 324.3 L726.5 324.4 L728.0 324.4 L729.5 324.4 L731.0 324.4 L732.5 324.4 L734.0 324.4 L735.5 324.4 L737.0 324.4 L738.5 324.4 L740.0 324.4 L741.5 324.4 L743.0 324.4 L744.5 324.4 L745.0 324.4" fill="none" stroke="#f01818" stroke-width="1.25" stroke-linejoin="round"/><text class="cht" x="282" y="44.8">Канал 3 (Breast)</text><text class="cht" x="740" y="44.8" text-anchor="end">30,00 с</text></svg>

</body></html>
